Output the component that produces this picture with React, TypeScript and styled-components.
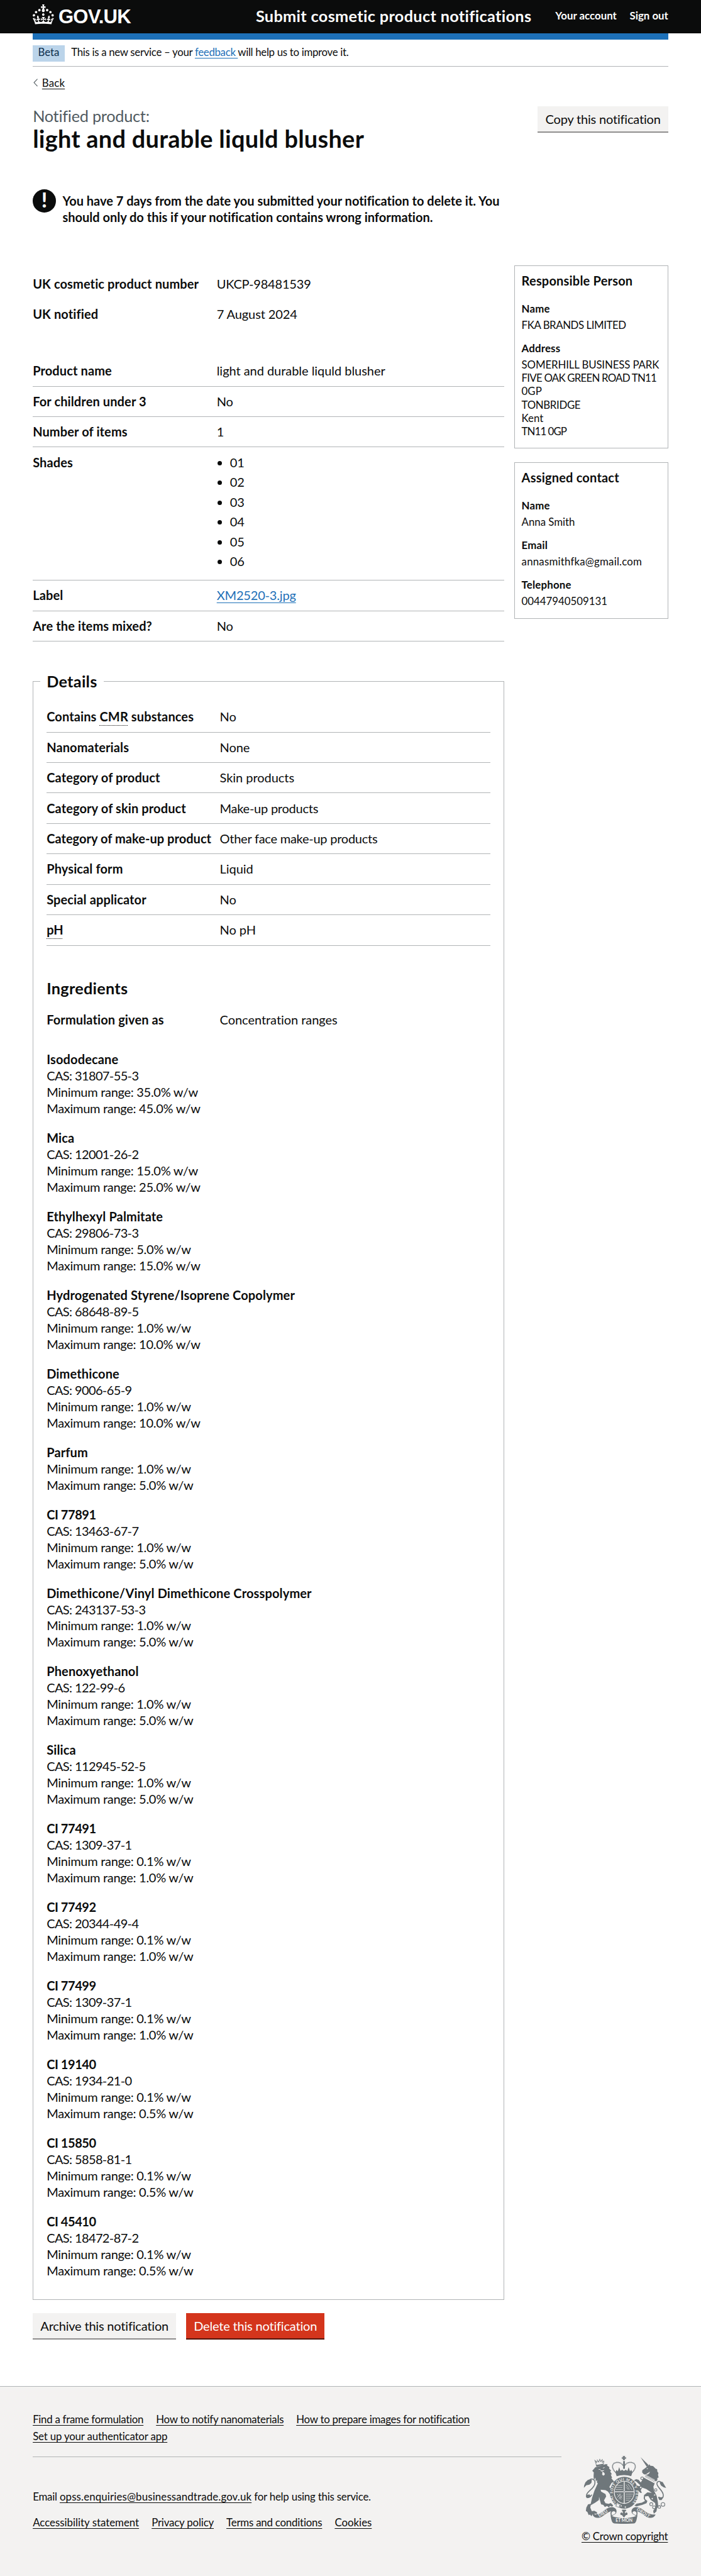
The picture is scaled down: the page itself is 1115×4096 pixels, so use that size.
import styled, { createGlobalStyle } from "styled-components";

type Ingredient = {
  name: string;
  cas?: string;
  min: string;
  max: string;
};

const shades = ["01", "02", "03", "04", "05", "06"];

const address = [
  { line: "SOMERHILL BUSINESS PARK", tracking: -0.008 },
  { line: "FIVE OAK GREEN ROAD TN11", tracking: -0.046 },
  { line: "0GP", tracking: 0 },
  { line: "TONBRIDGE", tracking: -0.02 },
  { line: "Kent", tracking: 0 },
  { line: "TN11 0GP", tracking: -0.055 },
];

const ingredients: Ingredient[] = [
  { name: "Isododecane", cas: "31807-55-3", min: "35.0", max: "45.0" },
  { name: "Mica", cas: "12001-26-2", min: "15.0", max: "25.0" },
  { name: "Ethylhexyl Palmitate", cas: "29806-73-3", min: "5.0", max: "15.0" },
  { name: "Hydrogenated Styrene/Isoprene Copolymer", cas: "68648-89-5", min: "1.0", max: "10.0" },
  { name: "Dimethicone", cas: "9006-65-9", min: "1.0", max: "10.0" },
  { name: "Parfum", min: "1.0", max: "5.0" },
  { name: "CI 77891", cas: "13463-67-7", min: "1.0", max: "5.0" },
  { name: "Dimethicone/Vinyl Dimethicone Crosspolymer", cas: "243137-53-3", min: "1.0", max: "5.0" },
  { name: "Phenoxyethanol", cas: "122-99-6", min: "1.0", max: "5.0" },
  { name: "Silica", cas: "112945-52-5", min: "1.0", max: "5.0" },
  { name: "CI 77491", cas: "1309-37-1", min: "0.1", max: "1.0" },
  { name: "CI 77492", cas: "20344-49-4", min: "0.1", max: "1.0" },
  { name: "CI 77499", cas: "1309-37-1", min: "0.1", max: "1.0" },
  { name: "CI 19140", cas: "1934-21-0", min: "0.1", max: "0.5" },
  { name: "CI 15850", cas: "5858-81-1", min: "0.1", max: "0.5" },
  { name: "CI 45410", cas: "18472-87-2", min: "0.1", max: "0.5" },
];

export default function App() {
  return (
    <>
      <GlobalStyle />
      <Header>
        <HeaderInner>
          <Logo>
            <Crown />
            <LogoText>GOV.UK</LogoText>
          </Logo>
          <HeaderNav>
            <ServiceName>Submit cosmetic product notifications</ServiceName>
            <NavLink>Your account</NavLink>
            <NavLink>Sign out</NavLink>
          </HeaderNav>
        </HeaderInner>
      </Header>
      <Container>
        <BlueBar />
        <PhaseBanner>
          <Tag>Beta</Tag>
          <PhaseText>
            This is a new service – your <Link $blue>feedback </Link>will help us to improve it.
          </PhaseText>
        </PhaseBanner>
        <BackLink>
          <BackArrow viewBox='0 0 7 12'>
            <path d='M6.2 0.5L1 6l5.2 5.5' fill='none' stroke='#505a5f' strokeWidth='1' />
          </BackArrow>
          <Link $tracking={0.01}>Back</Link>
        </BackLink>
        <TitleRow>
          <Title>
            <Caption>Notified product:</Caption>
            light and durable liquld blusher
          </Title>
          <Button $variant='secondary'>Copy this notification</Button>
        </TitleRow>
        <Warning>
          <WarningIcon>!</WarningIcon>
          <WarningText>
            You have 7 days from the date you submitted your notification to delete it. You should only do this if your
            notification contains wrong information.
          </WarningText>
        </Warning>
        <Columns>
          <Main>
            <SummaryList>
              <Row $plain>
                <Key>UK cosmetic product number</Key>
                <Value $tracking={-0.009}>UKCP-98481539</Value>
              </Row>
              <Row $plain>
                <Key>UK notified</Key>
                <Value $tracking={-0.005}>7 August 2024</Value>
              </Row>
            </SummaryList>
            <SummaryList $top={4.06}>
              <Row>
                <Key>Product name</Key>
                <Value>light and durable liquld blusher</Value>
              </Row>
              <Row>
                <Key>For children under 3</Key>
                <Value>No</Value>
              </Row>
              <Row>
                <Key>Number of items</Key>
                <Value>1</Value>
              </Row>
              <Row $height={20.1}>
                <Key>Shades</Key>
                <Value>
                  <BulletList>
                    {shades.map((shade) => (
                      <li key={shade}>{shade}</li>
                    ))}
                  </BulletList>
                </Value>
              </Row>
              <Row>
                <Key>Label</Key>
                <Value $tracking={-0.009}>
                  <Link $blue>XM2520-3.jpg</Link>
                </Value>
              </Row>
              <Row>
                <Key>Are the items mixed?</Key>
                <Value>No</Value>
              </Row>
            </SummaryList>
            <Fieldset>
              <Legend>Details</Legend>
              <SummaryList>
                <Row>
                  <Key>
                    Contains <Abbr>CMR</Abbr> substances
                  </Key>
                  <Value>No</Value>
                </Row>
                <Row>
                  <Key>Nanomaterials</Key>
                  <Value>None</Value>
                </Row>
                <Row>
                  <Key>Category of product</Key>
                  <Value>Skin products</Value>
                </Row>
                <Row>
                  <Key>Category of skin product</Key>
                  <Value $tracking={-0.012}>Make-up products</Value>
                </Row>
                <Row>
                  <Key $tracking={0.002}>Category of make-up product</Key>
                  <Value $tracking={-0.012}>Other face make-up products</Value>
                </Row>
                <Row>
                  <Key>Physical form</Key>
                  <Value>Liquid</Value>
                </Row>
                <Row>
                  <Key>Special applicator</Key>
                  <Value>No</Value>
                </Row>
                <Row>
                  <Key>
                    <Abbr>pH</Abbr>
                  </Key>
                  <Value>No pH</Value>
                </Row>
              </SummaryList>
              <SectionTitle>Ingredients</SectionTitle>
              <SummaryList $top={1}>
                <Row $plain>
                  <Key>Formulation given as</Key>
                  <Value>Concentration ranges</Value>
                </Row>
              </SummaryList>
              <IngredientList>
                {ingredients.map(({ name, cas, min, max }) => (
                  <li key={name}>
                    <IngredientName $code={name.startsWith("CI ")}>{name}</IngredientName>
                    {cas && <CasNumber>CAS: {cas}</CasNumber>}
                    <p>Minimum range: {min}% w/w</p>
                    <p>Maximum range: {max}% w/w</p>
                  </li>
                ))}
              </IngredientList>
            </Fieldset>
          </Main>
          <Sidebar>
            <Card>
              <CardTitle>Responsible Person</CardTitle>
              <CardLabel>Name</CardLabel>
              <CardValue $tracking={-0.026}>FKA BRANDS LIMITED</CardValue>
              <CardLabel>Address</CardLabel>
              <AddressLines>
                {address.map(({ line, tracking }) => (
                  <CardValue key={line} $tracking={tracking}>
                    {line}
                  </CardValue>
                ))}
              </AddressLines>
            </Card>
            <Card>
              <CardTitle>Assigned contact</CardTitle>
              <CardLabel>Name</CardLabel>
              <CardValue>Anna Smith</CardValue>
              <CardLabel>Email</CardLabel>
              <CardValue $tracking={0.012}>annasmithfka@gmail.com</CardValue>
              <CardLabel>Telephone</CardLabel>
              <CardValue>00447940509131</CardValue>
            </Card>
          </Sidebar>
        </Columns>
        <Actions>
          <Button $variant='secondary'>Archive this notification</Button>
          <Button $variant='warning'>Delete this notification</Button>
        </Actions>
      </Container>
      <Footer>
        <FooterInner>
          <FooterMeta>
            <FooterLinks>
              <Link $tracking={-0.0155}>Find a frame formulation</Link>
              <Link $tracking={-0.015}>How to notify nanomaterials</Link>
              <Link $tracking={-0.0136}>How to prepare images for notification</Link>
              <Link $tracking={-0.01}>Set up your authenticator app</Link>
            </FooterLinks>
            <Divider />
            <FooterText>
              Email <Link $tracking={0.0085}>opss.enquiries@businessandtrade.gov.uk</Link> for help using this service.
            </FooterText>
            <FooterLinks>
              <Link>Accessibility statement</Link>
              <Link $tracking={-0.01}>Privacy policy</Link>
              <Link $tracking={-0.012}>Terms and conditions</Link>
              <Link>Cookies</Link>
            </FooterLinks>
          </FooterMeta>
          <Copyright>
            <Crest />
            <Link $tracking={-0.013}>© Crown copyright</Link>
          </Copyright>
        </FooterInner>
      </Footer>
    </>
  );
}

function Crown() {
  return (
    <CrownSvg viewBox='0 0 32 30' fill='#fff'>
      <path
        fillRule='evenodd'
        d='M22.6 10.4c-1 .4-2-.1-2.4-1-.4-.9.1-2 1-2.4.9-.4 2 .1 2.4 1s-.1 2-1 2.4m-5.9 6.7c-.9.4-2-.1-2.4-1-.4-.9.1-2 1-2.4.9-.4 2 .1 2.4 1s-.1 2-1 2.4m10.8-3.7c-1 .4-2-.1-2.4-1-.4-.9.1-2 1-2.4.9-.4 2 .1 2.4 1s0 2-1 2.4m3.3 4.8c-1 .4-2-.1-2.4-1-.4-.9.1-2 1-2.4.9-.4 2 .1 2.4 1s-.1 2-1 2.4M17 4.7l2.3 1.2V2.5l-2.3.7-.2-.2.9-3h-3.4l.9 3-.2.2c-.1.1-2.3-.7-2.3-.7v3.4L15 4.7c.1.1.1.2.2.2l-1.3 4c-.1.2-.1.4-.1.6 0 1.1.8 2 1.9 2.2h.7c1-.2 1.9-1.1 1.9-2.1 0-.2 0-.4-.1-.6l-1.3-4c-.1-.2 0-.2.1-.3m-7.6 5.7c.9.4 2-.1 2.4-1 .4-.9-.1-2-1-2.4-.9-.4-2 .1-2.4 1s0 2 1 2.4m-5 3c.9.4 2-.1 2.4-1 .4-.9-.1-2-1-2.4-.9-.4-2 .1-2.4 1s.1 2 1 2.4m-3.2 4.8c.9.4 2-.1 2.4-1 .4-.9-.1-2-1-2.4-.9-.4-2 .1-2.4 1s0 2 1 2.4m14.8 11c4.4 0 8.6.3 12.3.8 1.1-4.5 2.4-7 3.7-8.8l-2.5-.9c.2 1.3.3 1.9 0 2.7-.4-.4-.8-1.1-1.1-2.3l-1.2 4c.7-.5 1.3-.8 2-.9-1.1 2.5-2.6 3.1-3.5 3-1.1-.2-1.7-1.2-1.5-2.1.3-1.2 1.5-1.5 2.1-.1 1.1-2.3-.8-3-2-2.3 1.9-1.9 2.1-3.5.6-5.6-2.1 1.6-2.1 3.2-1.2 5.5-1.2-1.4-3.2-.6-2.5 1.6.9-1.4 2.1-.5 1.9.8-.2 1.1-1.7 2.1-3.5 1.9-2.7-.2-2.9-2.1-2.9-3.6.7-.1 1.9.5 2.9 1.9l.4-4.3c-1.1 1.1-2.1 1.4-3.2 1.4.4-1.2 2.1-3 2.1-3h-5.4s1.7 1.9 2.1 3c-1.1 0-2.1-.2-3.2-1.4l.4 4.3c1-1.4 2.2-2 2.9-1.9-.1 1.5-.2 3.4-2.9 3.6-1.9.2-3.4-.8-3.5-1.9-.2-1.3 1-2.2 1.9-.8.7-2.3-1.2-3-2.5-1.6.9-2.2.9-3.9-1.2-5.5-1.5 2-1.3 3.7.6 5.6-1.2-.7-3.1 0-2 2.3.6-1.4 1.8-1.1 2.1.1.2.9-.3 1.9-1.5 2.1-.9.2-2.4-.5-3.5-3 .6 0 1.2.3 2 .9l-1.2-4c-.3 1.1-.7 1.9-1.1 2.3-.3-.8-.2-1.4 0-2.7l-2.9.9C1.3 23 2.6 25.5 3.7 30c3.7-.5 7.9-.8 12.3-.8'
      />
    </CrownSvg>
  );
}

function Crest() {
  const ink = "#6f777b";
  const paper = "#f3f2f1";

  return (
    <CrestSvg viewBox='70 113 753 614' fill={ink}>
      {/* lion */}
      <path d='M176 158l14 14 6-20 12 16 10-22 8 18 14-16 2 22 14-12-8 40-58 10z' fill='none' stroke={ink} strokeWidth='7' strokeDasharray='9 3' />
      <path d='M184 196l66-12 2 12-64 13z' />
      <path d='M178 216l48-12 42-16 20 0-4 12 22 16-4 10 20 22-10 6 16 26-10 2 12 30-8 4 28 32-24 8-22 40 26 22 20 28 2 34-24 14 2-20-16 16-2-26-20-28-22-12-44-4 4 16 40 24 6 20-20 36 14 26 28 6 20-8 22 22-10 12-20-8-8 14-18-12-20 8-14-18-20-6-10-36-8-32-2 30-32 22-42 24-4 22 14 32 22-4 26 14-4 18-18-8-2 18-18-10-8 18-16-16-10 6-12-28-14-10 4-30 16-30 24-4 12-54 22-66 30-66-8-8 2-22-12 12-4-34-14 26-2-42 2-32-14-14z' />
      <path d='M208 236l18 0M246 224l16-6M224 246l14 6 18-8M244 260l10 4 8 14-8 12-12-6z' fill={paper} stroke={paper} strokeWidth='5' />
      <path d='M146 464c-20 34-54 30-48 4 8-40 70-54 76-106 4-36-26-44-42-36' fill='none' stroke={ink} strokeWidth='9' />
      <path d='M74 402l2-20 12-30 20-20 26-10 12 10-4 26-18 16-28 6zM92 484l10 12 18-2 20-14-16-18-24 4z' />
      {/* unicorn */}
      <path d='M588 124l72 72-14 18z' />
      <path d='M602 262l2-20 20-14 26-20 20-20 4 14 28 4 22 22 14 6 2 22 10 12-4 18 6 22-12 6 0 20-12 10-98-52 34-18 10-18-22 14-20 12-16-4z' />
      <path d='M644 230l10-2M632 286l82 44' fill='none' stroke={paper} strokeWidth='6' />
      <path d='M640 282l70 44M628 300l90 50' fill='none' stroke={ink} strokeWidth='5' strokeDasharray='10 4' />
      <path d='M616 310l100 52-12 30 8 40 22 44 10 50 4 40-12 26-4 24-24 22-6-26 22-30-4-42-40-28-22-36-30 4 0 24 22 18-8 20-40 16-50 12-20-6 20-18 46-8 30-16-12-24 4-30 30-24 40 4-50-34-40-14-10 26 10 22-14 0-22-22-16-46 28 8 10-8-38-34-22-10 22-12 22 6 20 24z' />
      <path d='M752 484c14 20 42 20 42-14 0-44-58-70-58-106 0-18 20-26 34-14' fill='none' stroke={ink} strokeWidth='9' />
      <path d='M764 346l24 4 16 26 16 28-22-6-24-16-10-18zM746 488l12 26 20 0 18-26z' />
      <g fill={paper} stroke={ink} strokeWidth='6'>
        <circle cx='602' cy='316' r='12' />
        <circle cx='726' cy='422' r='11' />
        <circle cx='685' cy='551' r='14' />
        <circle cx='710' cy='579' r='13' />
        <circle cx='758' cy='576' r='12' />
        <circle cx='791' cy='553' r='17' />
        <circle cx='716' cy='468' r='9' />
        <circle cx='694' cy='500' r='9' />
        <circle cx='590' cy='400' r='10' />
      </g>
      {/* royal crown */}
      <path d='M426 114h22l-4 14 12-5v18l-12-4 3 14h-20l3-14-12 4v-18l12 5z' />
      <path d='M364 264c-46-40-38-92 14-92 30 0 46 18 52 30M510 264c46-40 38-92-14-92-30 0-46 18-52 30' fill='none' stroke={ink} strokeWidth='9' strokeDasharray='10 3' />
      <path d='M430 160h16v70h-16zM360 262l10-22 12 12 12-36 12 34 14-12 17 12 17-12 14 12 12-34 12 36 12-12 10 22-12 38c-46-14-84-14-130 0z' />
      <path d='M374 302c44-14 84-14 128 0' fill='none' stroke={paper} strokeWidth='10' />
      {/* garter and shield */}
      <ellipse cx='440' cy='447' rx='128' ry='145' />
      <ellipse cx='440' cy='443' rx='94' ry='104' fill={paper} />
      <ellipse cx='440' cy='443' rx='87' ry='97' />
      <path d='M440 346v194M353 438h174' fill='none' stroke={paper} strokeWidth='12' />
      <path d='M440 346v194M353 438h174' fill='none' stroke={ink} strokeWidth='4' />
      <path
        d='M376 382h50M368 400h56M364 418h60M458 376l30 44M474 370l36 50M458 400l20 20M378 460l34 50M394 456l26 44M376 490l36-34M390 506l32-34M456 460h60M456 478h56M456 496h44M456 514h32'
        fill='none'
        stroke={paper}
        strokeWidth='5'
        strokeDasharray='9 4'
      />
      <path id='garter' d='M386 556A105 118 0 1 1 506 546' fill='none' />
      <GarterText fill={paper}>
        <textPath href='#garter' textLength='560'>
          HONI SOIT QUI MAL Y PENSE
        </textPath>
      </GarterText>
      <path d='M364 572l16-40 10 20 24-6-20 20 10 14z' fill={paper} stroke={ink} strokeWidth='4' />
      <circle cx='412' cy='566' r='6' fill={paper} />
      <circle cx='450' cy='577' r='6' fill={paper} />
      {/* fleur and scroll */}
      <path d='M420 600h36v18l-8-6-2 22 12-10 12 8-2 16-14 2-8 12-8 10-10-10-8-12-14-2-2-16 12-8 12 10-2-22-6 6z' />
      <path d='M152 644c44 6 74-12 108-38 30-24 60-32 84-26 24 8 32 32 22 52-10 18-36 18-42 34-4-10-16-40-2-52-36 10-60 34-86 50-22 14-66 20-84-20z' />
      <path d='M724 644c-44 6-74-12-108-38-30-24-60-32-84-26-24 8-32 32-22 52 10 18 36 18 42 34 4-10 16-40 2-52 36 10 60 34 86 50 22 14 66 20 84-20z' />
      <path d='M330 652c-20-30 20-52 32-24-8 18-24 18-32 24zM546 652c20-30-20-52-32-24 8 18 24 18 32 24z' fill={paper} />
      <path d='M316 652c60 34 182 34 244 0-8 30-8 74-36 74-58 4-114 4-172 0-26-2-30-38-36-74z' />
      <ScrollText fill={paper} x='438' y='713' textAnchor='middle'>
        ET MON
      </ScrollText>
      <ScrollText fill={paper} transform='translate(214 668) rotate(-31)'>
        DIEU
      </ScrollText>
      <ScrollText fill={paper} transform='translate(550 603) rotate(33)' textLength='132'>
        DROIT
      </ScrollText>
    </CrestSvg>
  );
}

/* 1rem is ten page units */
const GlobalStyle = createGlobalStyle`
  html {
    font-size: 10.5288px;
  }

  body {
    margin: 0;
    color: #0b0c0c;
    background: #fff;
    font-family: Lato, "Liberation Sans", sans-serif;
  }

  p, ul, dl, dd, h1, h2, h3, h4 {
    margin: 0;
    padding: 0;
  }
`;

const Container = styled.div`
  width: 96rem;
  margin: 0 auto;
`;

const Header = styled.header`
  height: 5rem;
  background: #0b0c0c;
`;

const HeaderInner = styled(Container)`
  display: flex;
  justify-content: space-between;
  height: 100%;
  color: #fff;
`;

const Logo = styled.div`
  display: flex;
  align-items: flex-start;
  gap: 0.68rem;
  padding-top: 0.7rem;
`;

const CrownSvg = styled.svg`
  width: 3.2rem;
  height: 3rem;
`;

const LogoText = styled.span`
  padding-top: 0.3rem;
  font-family: "Liberation Sans", Arial, sans-serif;
  font-size: 2.95rem;
  font-weight: bold;
  line-height: 3rem;
  letter-spacing: -0.026em;
`;

const HeaderNav = styled.nav`
  display: flex;
  align-items: baseline;
  padding-top: 0.93rem;
`;

const ServiceName = styled.span`
  margin-right: 1.64rem;
  font-size: 2.4rem;
  font-weight: bold;
  line-height: 3rem;
  letter-spacing: 0.0135em;
`;

const NavLink = styled.a`
  position: relative;
  top: -0.32rem;
  margin-left: 1.97rem;
  font-size: 1.6rem;
  font-weight: bold;
`;

const BlueBar = styled.div`
  height: 1rem;
  background: #1d70b8;
`;

const PhaseBanner = styled.div`
  display: flex;
  align-items: flex-start;
  box-sizing: border-box;
  height: 4.1rem;
  padding-top: 0.8rem;
  border-bottom: 1px solid #b1b4b6;
  font-size: 1.6rem;
  line-height: 2.17rem;
`;

const Tag = styled.strong`
  box-sizing: border-box;
  width: 4.8rem;
  height: 2.48rem;
  margin-right: 1rem;
  background: #bbd4ea;
  color: #0c2d4a;
  font-weight: normal;
  text-align: center;
`;

const PhaseText = styled.span`
  letter-spacing: -0.0183em;
`;

const Link = styled.a<{ $blue?: boolean; $tracking?: number }>`
  color: ${({ $blue }) => ($blue ? "#1d70b8" : "inherit")};
  letter-spacing: ${({ $tracking }) => ($tracking === undefined ? "inherit" : `${$tracking}em`)};
  text-decoration: underline;
  text-decoration-thickness: 1px;
  text-decoration-skip-ink: none;
  text-underline-offset: 0.19em;
  white-space: pre;
`;

const BackLink = styled.div`
  display: flex;
  align-items: center;
  gap: 0.62rem;
  height: 2rem;
  margin-top: 1.38rem;
  font-size: 1.6rem;
  line-height: 2rem;
`;

const BackArrow = styled.svg`
  width: 0.7rem;
  height: 1.2rem;
  margin-left: 0.08rem;
`;

const TitleRow = styled.div`
  display: flex;
  justify-content: space-between;
  align-items: flex-start;
  height: 6.95rem;
  margin-top: 2.47rem;

  & > button {
    margin-top: 0.15rem;
  }
`;

const Title = styled.h1`
  padding-top: 0.07rem;
  font-size: 3.6rem;
  line-height: 4rem;
  letter-spacing: 0.0075em;
`;

const Caption = styled.span`
  display: block;
  color: #505a5f;
  font-size: 2.4rem;
  font-weight: normal;
  line-height: 2.95rem;
  letter-spacing: -0.0095em;
`;

const Button = styled.button<{ $variant: "secondary" | "warning" }>`
  height: 3.8rem;
  padding: 0 1.16rem;
  border: 0;
  background: ${({ $variant }) => ($variant === "warning" ? "#d4351c" : "#f3f2f1")};
  box-shadow: 0 0.2rem 0 ${({ $variant }) => ($variant === "warning" ? "#55150b" : "#929191")};
  color: ${({ $variant }) => ($variant === "warning" ? "#fff" : "#0b0c0c")};
  font-family: inherit;
  font-size: 1.9rem;
  letter-spacing: -0.0095em;
`;

const Warning = styled.div`
  display: flex;
  width: 71.25rem;
  height: 5.43rem;
  margin-top: 5.68rem;
`;

const WarningIcon = styled.span`
  flex: none;
  width: 3.5rem;
  height: 3.5rem;
  margin-right: 1rem;
  border-radius: 50%;
  background: #0b0c0c;
  color: #fff;
  font-size: 3rem;
  font-weight: 900;
  line-height: 3.4rem;
  text-align: center;
`;

const WarningText = styled.strong`
  padding-top: 0.46rem;
  font-size: 1.9rem;
  line-height: 2.5rem;
  letter-spacing: -0.0005em;
`;

const Columns = styled.div`
  display: flex;
  justify-content: space-between;
  align-items: flex-start;
  margin-top: 6.12rem;
`;

const Main = styled.main`
  width: 71.25rem;
  padding-top: 0.5rem;
`;

const SummaryList = styled.dl<{ $top?: number }>`
  margin-top: ${({ $top = 0 }) => $top}rem;
`;

const Row = styled.div<{ $plain?: boolean; $height?: number }>`
  display: grid;
  grid-template-columns: 39% 1fr;
  box-sizing: border-box;
  height: ${({ $plain, $height }) => $height ?? ($plain ? 4.55 : 4.6)}rem;
  padding-top: 0.96rem;
  border-bottom: ${({ $plain }) => ($plain ? "0" : "1px solid #b1b4b6")};
  font-size: 1.9rem;
  line-height: 2.5rem;
`;

const Key = styled.dt<{ $tracking?: number }>`
  font-weight: bold;
  letter-spacing: ${({ $tracking = 0.006 }) => $tracking}em;
  white-space: nowrap;
`;

const Value = styled.dd<{ $tracking?: number }>`
  letter-spacing: ${({ $tracking = -0.002 }) => $tracking}em;
`;

const BulletList = styled.ul`
  padding-left: 2rem;

  li {
    margin-bottom: 0.5rem;
  }
`;

const Abbr = styled.abbr`
  text-decoration: underline dotted 1px;
  text-underline-offset: 0.28em;
`;

const Fieldset = styled.fieldset`
  margin: 4.6rem 0 0;
  padding: 1.64rem 2rem 3.06rem;
  border: 1px solid #b1b4b6;
`;

const Legend = styled.legend`
  margin-left: -1rem;
  padding: 0 1rem;
  font-size: 2.4rem;
  font-weight: bold;
  line-height: 2.9rem;
  letter-spacing: 0.011em;
`;

const SectionTitle = styled.h2`
  margin-top: 5rem;
  font-size: 2.4rem;
  line-height: 3rem;
  letter-spacing: 0.011em;
`;

const IngredientList = styled.ul`
  display: flex;
  flex-direction: column;
  gap: 2.004rem;
  margin-top: 2.47rem;
  font-size: 1.9rem;
  line-height: 2.465rem;
  letter-spacing: -0.0145em;
  list-style: none;
`;

const IngredientName = styled.h4<{ $code: boolean }>`
  letter-spacing: ${({ $code }) => ($code ? "-0.022em" : "0.007em")};
`;

const CasNumber = styled.p`
  letter-spacing: -0.031em;
`;

const Sidebar = styled.aside`
  display: flex;
  flex-direction: column;
  gap: 2.11rem;
  width: 23.25rem;
`;

const Card = styled.section`
  padding: 0.93rem 1rem 1.57rem;
  border: 1px solid #b1b4b6;
`;

const CardTitle = styled.h2`
  font-size: 1.9rem;
  line-height: 2.5rem;
  letter-spacing: 0.01em;
`;

const CardLabel = styled.h3`
  margin-top: 1.5rem;
  font-size: 1.6rem;
  line-height: 2rem;
  letter-spacing: 0.01em;

  ${CardTitle} + & {
    margin-top: 1.93rem;
  }
`;

const CardValue = styled.p<{ $tracking?: number }>`
  margin-top: 0.5rem;
  font-size: 1.6rem;
  line-height: 2rem;
  letter-spacing: ${({ $tracking = -0.001 }) => $tracking}em;
  white-space: nowrap;
`;

const AddressLines = styled.div`
  margin-top: 0.5rem;

  ${CardValue} {
    margin-top: 0;
  }
`;

const Actions = styled.div`
  display: flex;
  gap: 1.5rem;
  margin-top: 2.03rem;
`;

const Footer = styled.footer`
  box-sizing: border-box;
  height: 28.7rem;
  margin-top: 7.22rem;
  padding-top: 3.92rem;
  border-top: 1px solid #b1b4b6;
  background: #f3f2f1;
  font-size: 1.6rem;
  line-height: 2rem;
`;

const FooterInner = styled(Container)`
  display: flex;
  justify-content: space-between;
  align-items: flex-start;
`;

const FooterMeta = styled.div`
  width: 79.9rem;
`;

const FooterLinks = styled.div`
  display: flex;
  flex-wrap: wrap;
  gap: 0.5rem 1.9rem;
  width: 72rem;
`;

const Divider = styled.hr`
  margin: 2.13rem 0 4.87rem;
  border: 0;
  border-top: 1px solid #b1b4b6;
`;

const FooterText = styled.p`
  margin-bottom: 1.94rem;
  letter-spacing: -0.012em;
`;

const Copyright = styled.div`
  display: flex;
  flex-direction: column;
  align-items: center;
  width: 13.15rem;
  padding-top: 6.5rem;
  white-space: nowrap;
`;

const CrestSvg = styled.svg`
  width: 12.55rem;
  height: 10.23rem;
  margin-bottom: 0.86rem;
`;

const GarterText = styled.text`
  font-size: 33px;
  font-weight: bold;
`;

const ScrollText = styled.text`
  font-size: 39px;
  font-weight: bold;
`;
